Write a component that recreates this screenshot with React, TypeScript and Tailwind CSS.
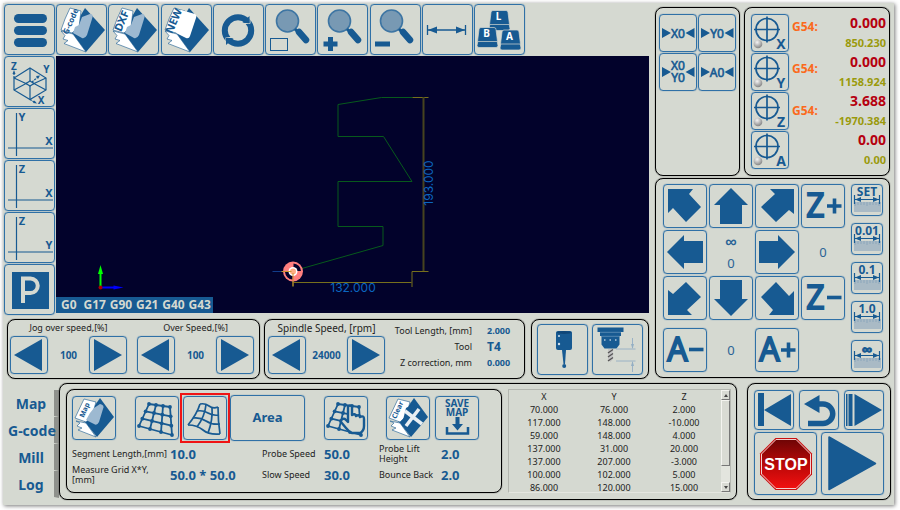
import type { ReactNode } from "react";

const BLUE = "#175a92";
const FACE = "#d5d9d1";
const MUTED = "#9db9d1";

/* ---------- building blocks ---------- */

function IconButton({ label, className, children }: { label: string; className: string; children: ReactNode }) {
  return (
    <button
      type="button"
      aria-label={label}
      className={`flex shrink-0 items-center justify-center rounded-[4px] border border-[#2f70a6] shadow-[0_0_1px_#2f70a6] ${className}`}
    >
      {children}
    </button>
  );
}

function Panel({ className, children }: { className: string; children: ReactNode }) {
  return (
    <section className={`rounded-[8px] border border-black shadow-[0_0_1px_#000] ${className}`}>{children}</section>
  );
}

function Icon({ size, children }: { size: number; children: ReactNode }) {
  return (
    <svg
      width={size}
      height={size}
      viewBox={`0 0 ${size} ${size}`}
      fill={BLUE}
      className="-m-px shrink-0 font-['Noto_Sans',sans-serif]"
      aria-hidden="true"
    >
      {children}
    </svg>
  );
}

/* ---------- toolbar icons ---------- */

function Folder({ text, fontSize, solid }: { text: string; fontSize: number; solid?: boolean }) {
  return (
    <>
      <path d="M28 3 48 25 29 47 14 27Z" />
      <path d="M13 3 24 6 22 22 15 28 4 25 8 14Z" fill="#fff" stroke={BLUE} strokeWidth="0.6" />
      <path
        d="M4 26 16 29 29 47 7 38.500 11 35.500 6 34 8 30.500Z"
        fill="#fff"
        stroke={BLUE}
        strokeWidth="0.6"
      />
      <path
        d={
          solid
            ? "M20 5 34 9Q36 10 35 13L29 31Q28 34 25 33L15 28Z"
            : "M25 12 33 9Q37 9 35 14L30 30Q28 34 25 33L16 28 18 22 22 20Z"
        }
        fill={solid ? "#fff" : MUTED}
      />
      <text
        x="0"
        y="0"
        transform="translate(13 16) rotate(-66)"
        dy="3.500"
        textAnchor="middle"
        fontSize={fontSize}
        fontWeight="700"
      >
        {text}
      </text>
    </>
  );
}

function Magnifier() {
  return (
    <>
      <circle cx="21.500" cy="16" r="11" fill="#7899b3" stroke="#3d75a3" strokeWidth="1.600" />
      <path d="M29 24 33 28" stroke={BLUE} strokeWidth="3" />
      <path d="M33 27 40 35" stroke={BLUE} strokeWidth="6.500" strokeLinecap="round" />
    </>
  );
}

function Key({ x, y, letter }: { x: number; y: number; letter: string }) {
  return (
    <g transform={`translate(${x} ${y})`} stroke={FACE} strokeWidth="0.700">
      <path d="M1 13 0 18Q0 20 2 20H19Q21 20 21 18L20 13Z" />
      <path d="M4 0H17Q19 0 19 2L20.500 14H.5L2 2Q2 0 4 0Z" />
      <text x="9.500" y="9.500" textAnchor="middle" fontSize="10" fontWeight="700" fill="#fff" stroke="none">
        {letter}
      </text>
    </g>
  );
}

const toolbar: { label: string; icon: ReactNode }[] = [
  {
    label: "Menu",
    icon: (
      <>
        <rect x="9" y="9" width="33" height="9" rx="4.500" />
        <rect x="9" y="21" width="33" height="9" rx="4.500" />
        <rect x="9" y="33" width="33" height="9" rx="4.500" />
      </>
    ),
  },
  { label: "Open G-code", icon: <Folder text="G-code" fontSize={8} /> },
  { label: "Open DXF", icon: <Folder text="DXF" fontSize={11} /> },
  { label: "New file", icon: <Folder text="NEW" fontSize={11} solid /> },
  {
    label: "Reload",
    icon: (
      <>
        <circle cx="25" cy="25.500" r="13.200" fill="none" stroke={BLUE} strokeWidth="6" />
        <path d="M30 18.500H37V11" fill="none" stroke={FACE} strokeWidth="1" />
        <path d="M29.500 17.500 36.500 11V18.500Z" />
        <path d="M13 39.500V32.500H20" fill="none" stroke={FACE} strokeWidth="1" />
        <path d="M20.500 33.500 13 40V32.500Z" />
      </>
    ),
  },
  {
    label: "Zoom to area",
    icon: (
      <>
        <Magnifier />
        <rect x="4.500" y="33.500" width="17" height="12" fill="none" stroke={BLUE} />
      </>
    ),
  },
  {
    label: "Zoom in",
    icon: (
      <>
        <Magnifier />
        <path d="M10 32H15V36.500H19.500V41.500H15V46H10V41.500H5.500V36.500H10Z" />
      </>
    ),
  },
  {
    label: "Zoom out",
    icon: (
      <>
        <Magnifier />
        <rect x="5" y="36.500" width="15" height="5" />
      </>
    ),
  },
  {
    label: "Measure",
    icon: (
      <>
        <path d="M5.500 20V30M43.500 20V30M6 25H43" stroke={BLUE} strokeWidth="1.300" />
        <path d="M6 25 15 21.500V28.500ZM43 25 34 21.500V28.500Z" />
      </>
    ),
  },
  {
    label: "Keyboard",
    icon: (
      <>
        <Key x={15} y={5.5} letter="L" />
        <Key x={3} y={22.5} letter="B" />
        <Key x={26} y={25} letter="A" />
      </>
    ),
  },
];

/* ---------- view column ---------- */

function Axes({ v, h }: { v: string; h: string }) {
  return (
    <>
      <path d="M11.500 4V47M3 39H48" stroke={BLUE} strokeWidth="1.200" />
      <text x="17" y="12" textAnchor="middle" fontSize="11" fontWeight="700">{v}</text>
      <text x="44" y="36" textAnchor="middle" fontSize="11" fontWeight="700">{h}</text>
    </>
  );
}

const views: { label: string; icon: ReactNode }[] = [
  {
    label: "3D view",
    icon: (
      <>
        <g fill="none" stroke={BLUE} strokeWidth="1.200">
          <path d="M25 11 41 21V33L25 42.500 9 33V21Z" />
          <path d="M25 11V24M25 29V42.500M9 21 22 27M9 33 22 26M41 21 28 27M41 33 28 26" />
          <path d="M21 26.500 25 24 29 26.500 25 29Z" />
          <path d="M9 21V15M27 25 33 20M25 42.500 29 45" strokeDasharray="2 1" />
        </g>
        <path d="M9 13 7.500 17H10.500ZM35 18.500 31 19 33 22ZM32 46.500 28 46 29.500 43.500Z" />
        <text x="9" y="12.500" textAnchor="middle" fontSize="10" fontWeight="700">Z</text>
        <text x="41.500" y="16" textAnchor="middle" fontSize="10" fontWeight="700">Y</text>
        <text x="36" y="47" textAnchor="middle" fontSize="10" fontWeight="700">X</text>
      </>
    ),
  },
  { label: "XY view", icon: <Axes v="Y" h="X" /> },
  { label: "XZ view", icon: <Axes v="Z" h="X" /> },
  { label: "YZ view", icon: <Axes v="Z" h="Y" /> },
  {
    label: "Perspective",
    icon: (
      <>
        <rect x="7" y="7" width="37" height="37" />
        <path d="M18 38V13.500H25.500A7.200 7.200 0 0 1 25.500 28H18" fill="none" stroke={FACE} strokeWidth="4" />
      </>
    ),
  },
];

function Viewport() {
  return (
    <div className="relative min-w-0 flex-1 bg-[#02022b]">
      <svg
        viewBox="0 0 594 257"
        preserveAspectRatio="xMidYMid slice"
        className="absolute inset-0 size-full font-['Inter',sans-serif]"
        fill="none"
        role="img"
        aria-label="Tool path, 132 by 193 mm"
      >
        <path
          d="M237.500 215 327.500 189.500V170.500H282.500V125.500H356.500L328 80.500H282.500V48.500L326 41.500H357"
          stroke="#075a1c"
        />
        <path d="M357 41.500H373M356.500 231V215.500H373M237.500 216V231M238 226.500H356" stroke="#77701c" />
        <path d="M368 41V215" stroke="#46431f" strokeWidth="2" />
        <path d="M217 215.500H228" stroke="#123c8a" />
        <circle cx="237.500" cy="215.500" r="10" fill="#ff7f7f" />
        <path d="M238 207.500A8 8 0 0 1 245.500 215H238ZM237 223.500A8 8 0 0 1 229.500 216H237Z" fill="#02022b" />
        <circle cx="237.500" cy="215.500" r="4.500" fill="#fff" />
        <circle cx="237.500" cy="215.500" r="3" fill="#ffae85" />
        <path d="M226 215.500H236M237.500 217V230" stroke="#c9952f" />
        <text x="297.500" y="236" textAnchor="middle" fontSize="12" fontWeight="400" fill="#0b66c0">132.000</text>
        <text
          transform="translate(377 127) rotate(-90)"
          textAnchor="middle"
          fontSize="12"
          fontWeight="400"
          fill="#0b66c0"
        >
          193.000
        </text>
        <path d="M45 231V218" stroke="#0f0" strokeWidth="2" />
        <path d="M45 209 42.500 218H47.500Z" fill="#0f0" />
        <path d="M45 231.500H60" stroke="#00f" strokeWidth="2" />
        <path d="M68 231.500 58 229.500V233.500Z" fill="#00f" />
        <circle cx="45" cy="231.500" r="2" fill="#a00" />
      </svg>
      <p className="absolute bottom-0 left-0 flex h-4 w-[157px] items-center justify-between whitespace-pre bg-[#175a92] pl-[5px] pr-[2px] text-[12px] font-bold leading-4 text-[#d5d9d1]">
        {["G0 ", "G17", "G90", "G21", "G40", "G43"].map((code) => (
          <span key={code}>{code}</span>
        ))}
      </p>
    </div>
  );
}

/* ---------- speed row ---------- */

function Stepper({ id, title, value, large }: { id: string; title: string; value: string; large?: boolean }) {
  return (
    <div className="flex w-[117px] flex-col items-center">
      <label
        htmlFor={id}
        className={`whitespace-nowrap leading-4 text-[#222] ${large ? "text-[10px]" : "text-[9px]"}`}
      >
        {title}
      </label>
      <div className="flex w-full items-center justify-between">
        <IconButton label={`Decrease ${title}`} className="size-[38px]">
          <Icon size={38}>
            <path d="M32 3V35L4 19Z" />
          </Icon>
        </IconButton>
        <output id={id} className="text-[10px] font-bold text-[#175a92]">{value}</output>
        <IconButton label={`Increase ${title}`} className="size-[38px]">
          <Icon size={38}>
            <path d="M5 3V35L33 19Z" />
          </Icon>
        </IconButton>
      </div>
    </div>
  );
}

function SpeedRow() {
  return (
    <div className="mt-1 flex h-[60px] pl-[3px]">
      <Panel className="flex flex-1 justify-between pl-[2px] pr-[5px]">
        <Stepper id="jog-speed" title="Jog over speed,[%]" value="100" />
        <Stepper id="over-speed" title="Over Speed,[%]" value="100" />
      </Panel>
      <Panel className="ml-1 flex w-[261px] justify-between pl-[3px] pr-[13px]">
        <Stepper id="spindle-speed" title="Spindle Speed, [rpm]" value="24000" large />
        <dl className="grid grid-cols-[auto_24px] content-start items-center gap-x-[15px] whitespace-nowrap pt-[3px] text-[9px] leading-4">
          <dt className="text-right text-[#222]">Tool Length, [mm]</dt>
          <dd className="text-[9px] font-bold text-[#175a92]">2.000</dd>
          <dt className="text-right text-[#222]">Tool</dt>
          <dd className="text-[12px] font-bold text-[#175a92]">T4</dd>
          <dt className="text-right text-[#222]">Z correction, mm</dt>
          <dd className="text-[9px] font-bold text-[#175a92]">0.000</dd>
        </dl>
      </Panel>
      <Panel className="ml-1.5 flex w-[118px] items-center justify-center gap-1">
        <IconButton label="Probe" className="size-[51px]">
          <Icon size={50}>
            <rect x="18" y="7" width="16" height="19" rx="2" />
            <ellipse cx="26" cy="8.500" rx="7.500" ry="1.500" fill="#0f4678" />
            <path d="M24 26H28L27 40H25.500Z" />
            <circle cx="26.200" cy="42" r="2" />
            <circle cx="21" cy="12" r="1" fill="#cfe0ee" />
            <circle cx="21" cy="20" r="1.200" fill="#cfe0ee" />
          </Icon>
        </IconButton>
        <IconButton label="Tool length" className="size-[51px]">
          <Icon size={50}>
            <path d="M4.500 3.500H30.500V8H28V12H26.500V20.500L23.500 24.500H11.500L8.500 20.500V12H7V8H4.500Z" />
            <path d="M7 8.300H28M8.500 12.300H26.500" stroke="#6f9abd" strokeWidth="0.700" />
            <path d="M11 16H12.500M16.500 16H18M22 16H23.500" stroke="#fff" strokeWidth="1.200" />
            <path d="M15 25H20V35L17.500 38 15 36Z" fill="#c4c4c4" />
            <path d="M15 29 20 25.500M15 33 20 29.500M15 37 20 33.500" stroke="#555" strokeWidth="1.400" />
            <path d="M23 25H42.500M23 37H42.500M39.500 14V24M39.500 38V48" stroke="#93aec4" strokeWidth="0.900" />
            <path d="M39.500 25 38 20H41ZM39.500 37 38 42H41Z" fill="#93aec4" />
          </Icon>
        </IconButton>
      </Panel>
    </div>
  );
}

/* ---------- zero + read-out panels ---------- */

function ZeroPanel() {
  return (
    <Panel className="grid w-[85px] shrink-0 grid-cols-[38px_38px] content-start justify-center gap-px pt-1.5">
      {[["X0"], ["Y0"], ["X0", "Y0"], ["A0"]].map((lines) => (
        <IconButton key={lines.join("-")} label={`Go to ${lines.join(" ")}`} className="size-[38px]">
          <Icon size={38}>
            <path d="M3 14V24L12 19ZM35.500 14V24L26.500 19Z" />
            {lines.map((line, i) => (
              <text
                key={line}
                x="19"
                y={lines.length === 1 ? 23.5 : 17 + i * 12}
                textAnchor="middle"
                fontSize="12"
                stroke={BLUE}
                strokeWidth="0.600"
              >
                {line}
              </text>
            ))}
          </Icon>
        </IconButton>
      ))}
    </Panel>
  );
}

const axes = [
  { axis: "X", offset: "G54:", work: "0.000", machine: "850.230" },
  { axis: "Y", offset: "G54:", work: "0.000", machine: "1158.924" },
  { axis: "Z", offset: "G54:", work: "3.688", machine: "-1970.384" },
  { axis: "A", offset: "", work: "0.00", machine: "0.00" },
];

function ReadoutPanel() {
  return (
    <Panel className="ml-1 flex flex-1 pl-1.5 pr-[3px] pt-1.5 font-bold">
      <div className="flex flex-col gap-px">
        {axes.map(({ axis }) => (
          <IconButton key={axis} label={`Zero ${axis}`} className="size-[38px]">
            <Icon size={38}>
              <defs>
                <radialGradient id={`led-${axis}`} cx="0.400" cy="0.300" r="0.700">
                  <stop offset="0" stopColor="#f4f4f4" />
                  <stop offset="1" stopColor="#858585" />
                </radialGradient>
              </defs>
              <circle cx="16" cy="15.500" r="11" fill="none" stroke={BLUE} strokeWidth="1.700" />
              <path d="M16 2.500V28.500M3 15.500H29" stroke={BLUE} strokeWidth="1.700" />
              <circle cx="7" cy="30" r="4.300" fill={`url(#led-${axis})`} />
              <text x="30" y="35" textAnchor="middle" fontSize="14">{axis}</text>
            </Icon>
          </IconButton>
        ))}
      </div>
      <div className="ml-[3px] flex flex-col pt-[5px] text-[12px] leading-4 text-[#fb6a1c]">
        {axes.filter(({ offset }) => offset).map(({ axis, offset }) => (
          <span key={axis} className="h-[42px] shrink-0">{offset}</span>
        ))}
      </div>
      <div className="flex flex-1 flex-col gap-px text-right">
        {axes.map(({ axis, work, machine }) => (
          <span key={axis} className="flex h-[38px] flex-col">
            <span className="text-[14px] leading-[18px] text-[#b5000f]">{work}</span>
            <span className="text-[11px] leading-[22px] text-[#9a9a0c]">{machine}</span>
          </span>
        ))}
      </div>
    </Panel>
  );
}

/* ---------- jog panel ---------- */

const STRAIGHT = "M22 4 39 21H33V40H11V21H5Z";
const DIAGONAL = "M5 5H30L26 10 38 23 23 38 10 24 5 29Z";

function JogArrow({ label, d, turn }: { label: string; d: string; turn: number }) {
  return (
    <IconButton label={label} className="size-11">
      <Icon size={44}>
        <path d={d} transform={`rotate(${turn} 22 22)`} />
      </Icon>
    </IconButton>
  );
}

function JogAxis({ axis, sign }: { axis: string; sign: "+" | "−" }) {
  return (
    <IconButton label={`Jog ${axis}${sign}`} className="size-11">
      <Icon size={44}>
        <text x="14.500" y="33" textAnchor="middle" fontSize="32" stroke={BLUE} strokeWidth="1.800">
          {axis}
        </text>
        <path d={sign === "+" ? "M26 22H40.500M33.500 14.500V29.500" : "M26 21.500H40.500"} stroke={BLUE} strokeWidth="3.600" />
      </Icon>
    </IconButton>
  );
}

function JogValue({ children }: { children: ReactNode }) {
  return <span className="flex flex-col items-center justify-center text-[13px] text-[#2a6496]">{children}</span>;
}

function JogPanel() {
  return (
    <Panel className="mt-0.5 flex justify-between py-[5px] pl-[7px] pr-[6px]">
      <div className="grid grid-cols-[repeat(4,44px)] grid-rows-[44px_44px_44px_50px] items-end gap-x-0.5 gap-y-[2px]">
        <JogArrow label="Jog X- Y+" d={DIAGONAL} turn={0} />
        <JogArrow label="Jog Y+" d={STRAIGHT} turn={0} />
        <JogArrow label="Jog X+ Y+" d={DIAGONAL} turn={90} />
        <JogAxis axis="Z" sign="+" />
        <JogArrow label="Jog X-" d={STRAIGHT} turn={-90} />
        <JogValue>
          <span className="text-[16px] font-bold leading-[22px]">∞</span>
          <span className="leading-[22px]">0</span>
        </JogValue>
        <JogArrow label="Jog X+" d={STRAIGHT} turn={90} />
        <JogValue>
          <span className="leading-[44px]">0</span>
        </JogValue>
        <JogArrow label="Jog X- Y-" d={DIAGONAL} turn={-90} />
        <JogArrow label="Jog Y-" d={STRAIGHT} turn={180} />
        <JogArrow label="Jog X+ Y-" d={DIAGONAL} turn={180} />
        <JogAxis axis="Z" sign="−" />
        <JogAxis axis="A" sign="−" />
        <JogValue>
          <span className="leading-[44px]">0</span>
        </JogValue>
        <JogAxis axis="A" sign="+" />
      </div>
      <div className="flex flex-col justify-between">
        {["SET", "0.01", "0.1", "1.0", "∞"].map((step) => (
          <IconButton key={step} label={`Step ${step}`} className="size-8">
            <Icon size={32}>
              <rect x="3" y="18" width="27" height="10" fill="#a9bac5" />
              <path d="M4 18V22M7 18V21M10 18V21M13 18V21M16 18V22M19 18V21M22 18V21M25 18V21M28 18V22" stroke="#7f9fb8" strokeWidth="0.700" />
              <path d="M3.500 11V20M28.500 11V20M4 15.500H28" stroke={BLUE} strokeWidth="1.200" />
              <path d="M4 15.500 10 13V18ZM28 15.500 22 13V18Z" />
              <text
                x="16"
                y={step === "∞" ? 14 : 12}
                textAnchor="middle"
                fontSize={step === "∞" ? 14 : 12}
                fontWeight="700"
                stroke={BLUE}
                strokeWidth={step === "∞" ? 1 : 0}
              >
                {step}
              </text>
            </Icon>
          </IconButton>
        ))}
      </div>
    </Panel>
  );
}

/* ---------- height-map panel ---------- */

function NodeGrid() {
  const steps = [0, 1 / 3, 2 / 3, 1];
  const point = (u: number, v: number) => ({
    x: (14 + 21 * u) * (1 - v) + (4 + 33 * u) * v,
    y: (8 + 3 * u) * (1 - v) + (30 + 9 * u) * v,
  });
  return (
    <>
      {steps.map((s) => {
        const [a, b, c, d] = [point(0, s), point(1, s), point(s, 0), point(s, 1)];
        return (
          <path
            key={s}
            d={`M${a.x} ${a.y}L${b.x} ${b.y}M${c.x} ${c.y}L${d.x} ${d.y}`}
            stroke={BLUE}
            strokeWidth="1.800"
          />
        );
      })}
      {steps.flatMap((u) =>
        steps.map((v) => <circle key={`${u}-${v}`} cx={point(u, v).x} cy={point(u, v).y} r="1.900" />),
      )}
    </>
  );
}

function MiniFolder({ text, clear }: { text: string; clear?: boolean }) {
  return (
    <>
      <path d="M28 2 42 21 25 41 12 25Z" />
      <path d="M12 3 24 6 20 20 14 26 3 22Z" fill="#fff" stroke={BLUE} strokeWidth="0.600" />
      <path d="M4 25 14 27 24 41 6 34 10 32 5 30 8 27Z" fill="#fff" stroke={BLUE} strokeWidth="0.600" />
      {clear ? (
        <>
          <path d="M20 12 27 8 35 22 26 33 16 28Z" />
          <path d="M19 15 36 28M33 13 20 30" stroke="#e8eef2" strokeWidth="3.500" />
        </>
      ) : (
        <path d="M22 12 28 8Q33 9 31 13L27 26Q25 30 22 28L14 24 18 17Z" fill={MUTED} />
      )}
      <text
        transform={`translate(${clear ? 11.5 : 12.5} 14) rotate(-66)`}
        dy="2.500"
        textAnchor="middle"
        fontSize="7"
        fontWeight="700"
      >
        {text}
      </text>
    </>
  );
}

function Field({ id, name, value }: { id: string; name: string; value: string }) {
  return (
    <>
      <label htmlFor={id} className="text-[9px] leading-[10px] text-[#222]">{name}</label>
      <output id={id} className="whitespace-pre text-[13px] font-bold leading-4 text-[#175a92]">{value}</output>
    </>
  );
}

const points = [
  ["70.000", "76.000", "2.000"],
  ["117.000", "148.000", "-10.000"],
  ["59.000", "148.000", "4.000"],
  ["137.000", "31.000", "20.000"],
  ["137.000", "207.000", "-3.000"],
  ["100.000", "102.000", "5.000"],
  ["86.000", "120.000", "15.000"],
];

function PointTable() {
  const bevel =
    "border border-b-[#777] border-l-[#f4f4f0] border-r-[#777] border-t-[#f4f4f0] bg-[#d9dbd4]";
  return (
    <div className="flex w-[223px] shrink-0 overflow-hidden border border-b-[#e4e6e0] border-l-[#b4b7b0] border-r-[#b4b7b0] border-t-[#b4b7b0]">
      <table className="h-[104px] w-[210px] table-fixed text-center text-[9px] leading-[13px] text-[#222]">
        <thead>
          <tr>
            {["X", "Y", "Z"].map((name) => (
              <th key={name} scope="col" className="p-0 font-normal">{name}</th>
            ))}
          </tr>
        </thead>
        <tbody>
          {points.map((row, i) => (
            <tr key={i}>
              {row.map((cell, j) => (
                <td key={j} className="p-0">{cell}</td>
              ))}
            </tr>
          ))}
        </tbody>
      </table>
      <div className="ml-auto flex w-[9px] flex-col bg-[#e3e5de]">
        <button type="button" aria-label="Scroll up" className={`flex h-[10px] items-center justify-center ${bevel}`}>
          <svg width="4" height="3" viewBox="0 0 4 3" aria-hidden="true"><path d="M2 0 4 3H0Z" fill="#444" /></svg>
        </button>
        <div className={`h-[66px] ${bevel}`} />
        <button
          type="button"
          aria-label="Scroll down"
          className={`mt-auto flex h-[10px] items-center justify-center ${bevel}`}
        >
          <svg width="4" height="3" viewBox="0 0 4 3" aria-hidden="true"><path d="M2 3 4 0H0Z" fill="#444" /></svg>
        </button>
      </div>
    </div>
  );
}

function MapPanel() {
  return (
    <Panel className="flex h-[117px] min-w-0 flex-1 justify-between gap-1.5 pb-1.5 pl-1.5 pr-[5px] pt-[5px]">
      <Panel className="flex min-w-0 flex-1 flex-col pl-[5px] pt-[3px]">
        <div className="flex h-[50px] items-center">
          <IconButton label="Open map" className="size-11">
            <Icon size={44}><MiniFolder text="Map" /></Icon>
          </IconButton>
          <IconButton label="Straight grid" className="ml-[19px] size-11">
            <Icon size={44}><NodeGrid /></Icon>
          </IconButton>
          <div className="ml-px border-2 border-[#f01414] p-px">
            <IconButton label="Curved grid" className="size-11">
              <Icon size={44}>
                <g fill="none" stroke={BLUE} strokeWidth="1.700">
                  <path d="M17 8Q22 7 26 10T35 11M14 15Q20 14 25 17T36 19M10 22Q17 21 23 25T37 28M5 29Q14 29 20 34T37 38" />
                  <path d="M17 8Q14 18 5 29M23 8.500Q22 20 14 31M29 11Q30 24 25 37M35 11Q35 25 37 38" />
                </g>
              </Icon>
            </IconButton>
          </div>
          <button
            type="button"
            className="h-[46px] w-[75px] rounded-[4px] border border-[#2f70a6] text-[13px] font-bold text-[#175a92] shadow-[0_0_1px_#2f70a6]"
          >
            Area
          </button>
          <IconButton label="Pick grid point" className="ml-[19px] size-11">
            <Icon size={44}>
              <NodeGrid />
              <path
                d="M22 32 17 26Q17 22 21 23L24 26V11Q26 8 28 11V19Q31 17 32 20 35 18 36 21 40 19 40 23V30Q40 35 36 37H28Q25 36 22 32Z"
                fill={FACE}
                stroke={BLUE}
                strokeWidth="2.400"
                strokeLinejoin="round"
              />
            </Icon>
          </IconButton>
          <IconButton label="Clear map" className="ml-[18px] size-11">
            <Icon size={44}><MiniFolder text="Clear" clear /></Icon>
          </IconButton>
          <IconButton label="Save map" className="ml-[5px] size-11">
            <Icon size={44}>
              <text x="22" y="11" textAnchor="middle" fontSize="10" fontWeight="700">SAVE</text>
              <text x="22" y="20" textAnchor="middle" fontSize="10" fontWeight="700">MAP</text>
              <path d="M20.500 21H24.500V28H28L22.500 34.500 17 28H20.500Z" />
              <path d="M12 31V37.500H33V31" fill="none" stroke={BLUE} strokeWidth="2.500" />
            </Icon>
          </IconButton>
        </div>
        <div className="grid grid-cols-[98px_92px_62px_55px_62px_auto] grid-rows-[22px_20px] items-center justify-start">
          <Field id="segment" name="Segment Length,[mm]" value="10.0" />
          <Field id="probe-speed" name="Probe Speed" value="50.0" />
          <Field id="probe-lift" name="Probe Lift Height" value="2.0" />
          <Field id="grid-size" name="Measure Grid X*Y, [mm]" value="50.0 * 50.0" />
          <Field id="slow-speed" name="Slow Speed" value="30.0" />
          <Field id="bounce" name="Bounce Back" value="2.0" />
        </div>
      </Panel>
      <PointTable />
    </Panel>
  );
}

function RunPanel() {
  return (
    <Panel className="ml-[10px] flex w-[144px] shrink-0 flex-col justify-between px-[6px] pb-1 pt-1.5">
      <div className="flex justify-between">
        <IconButton label="Rewind" className="size-10">
          <Icon size={40}><path d="M4 3H10V36H4ZM37 4V36L10 20Z" /></Icon>
        </IconButton>
        <IconButton label="Step back" className="size-10">
          <Icon size={40}>
            <path d="M18 14H24A9.500 9.500 0 0 1 24 33.500H9" fill="none" stroke={BLUE} strokeWidth="5.500" />
            <path d="M5 14 20.500 5V23Z" />
          </Icon>
        </IconButton>
        <IconButton label="Step forward" className="size-10">
          <Icon size={40}><path d="M2 4H3.500V36H2ZM4.500 4H8.500V36H4.500ZM10.500 4V36L38 20Z" /></Icon>
        </IconButton>
      </div>
      <div className="flex justify-between">
        <IconButton label="Stop" className="size-[63px]">
          <Icon size={62}>
            <defs>
              <linearGradient id="stop-red" x1="0" y1="0" x2="0" y2="1">
                <stop offset="0" stopColor="#6e0505" />
                <stop offset="0.500" stopColor="#b80808" />
                <stop offset="1" stopColor="#f21010" />
              </linearGradient>
            </defs>
            <path d="M20.500 5H41.500L57 20.500V41.500L41.500 57H20.500L5 41.500V20.500Z" fill="#c81010" />
            <path d="M21 6.500H41L55.500 21V41L41 55.500H21L6.500 41V21Z" fill="url(#stop-red)" stroke="#f2cfcf" />
            <text
              x="31"
              y="37"
              textAnchor="middle"
              fontSize="16"
              fontWeight="700"
              fill="#fff"
              className="font-['Liberation_Sans',sans-serif]"
            >
              STOP
            </text>
          </Icon>
        </IconButton>
        <IconButton label="Start" className="size-[63px]">
          <Icon size={62}>
            <path d="M7 4V56.500L53.500 30.500Z" stroke={BLUE} strokeWidth="1.500" strokeLinejoin="round" />
          </Icon>
        </IconButton>
      </div>
    </Panel>
  );
}

export default function App() {
  return (
    <div className="min-h-screen bg-white pb-[5px] pl-[3px] pr-1.5 pt-[3px] font-['Noto_Sans',sans-serif]">
      <main className="bg-[#d5d9d1] pb-[5px] pl-px pr-[3px] pt-px shadow-[1px_1px_4px_#777]">
        <div className="flex pr-px">
          <div className="flex min-w-0 flex-1 flex-col">
            <div className="flex w-[521px] justify-between">
              {toolbar.map(({ label, icon }) => (
                <IconButton key={label} label={label} className="size-[51px]">
                  <Icon size={50}>{icon}</Icon>
                </IconButton>
              ))}
            </div>
            <div className="mt-px flex h-[257px] gap-px">
              <div className="flex h-[259px] flex-col justify-between">
                {views.map(({ label, icon }) => (
                  <IconButton key={label} label={label} className="size-[51px]">
                    <Icon size={50}>{icon}</Icon>
                  </IconButton>
                ))}
              </div>
              <Viewport />
            </div>
            <div className="pt-0.5">
              <SpeedRow />
            </div>
          </div>
          <div className="ml-1.5 flex w-[235px] shrink-0 flex-col pt-[3px]">
            <div className="flex h-[169px]">
              <ZeroPanel />
              <ReadoutPanel />
            </div>
            <JogPanel />
          </div>
        </div>
        <div className="mt-1 flex">
          <div role="tablist" className="flex w-[55px] shrink-0 flex-col pt-[7px]">
            {["Map", "G-code", "Mill", "Log"].map((tab) => (
              <button
                key={tab}
                type="button"
                role="tab"
                aria-selected={tab === "Map"}
                className="h-[27px] whitespace-nowrap border-b border-r-[5px] border-b-[#d5d9d1] border-r-[#8f918c] pl-1 text-[14px] font-bold text-[#175a92]"
              >
                {tab}
              </button>
            ))}
          </div>
          <MapPanel />
          <RunPanel />
        </div>
      </main>
    </div>
  );
}
